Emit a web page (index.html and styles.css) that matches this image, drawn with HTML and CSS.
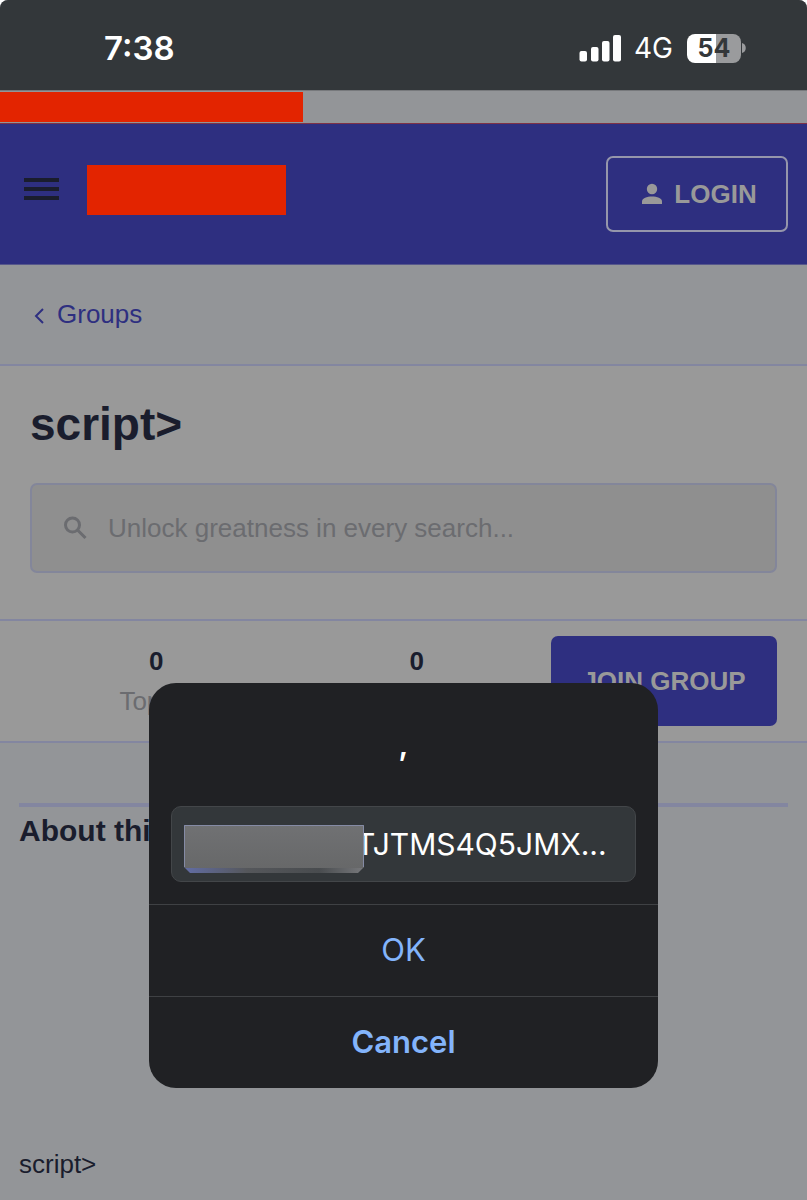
FILE: index.html
```html
<!DOCTYPE html>
<html lang="en">

<head>
  <meta charset="utf-8">
  <meta name="viewport" content="width=device-width, initial-scale=1">
  <title>Groups</title>
  <link rel="stylesheet" href="styles.css">
</head>

<body>
  <div class="status-bar">
    <span class="time">7:38</span>
    <div class="indicators">
      <svg class="signal" viewBox="0 0 42 28" width="42" height="28">
        <rect x="0.500" y="17" width="7.500" height="10.500" rx="2" />
        <rect x="12" y="13" width="7.500" height="14.500" rx="2" />
        <rect x="23" y="7" width="7.500" height="20.500" rx="2" />
        <rect x="34" y="1" width="8" height="26.500" rx="2" />
      </svg>
      <span class="network">4G</span>
      <div class="battery">
        <span class="battery-level">54</span>
        <svg class="battery-cap" viewBox="0 0 5 10" width="5" height="10">
          <path d="M1 0C6 1 6 9 1 10Z" />
        </svg>
      </div>
    </div>
  </div>

  <div class="notice"><div class="notice-block"></div></div>

  <header class="header">
    <button class="menu-btn" type="button" aria-label="Menu">
      <span></span>
      <span></span>
      <span></span>
    </button>
    <div class="logo"></div>
    <a class="login" href="#">
      <svg viewBox="0 0 22 22" width="22" height="22">
        <circle cx="11" cy="6" r="5.200" />
        <path d="M1 21V18.500C1 15 6 13.500 11 13.500S21 15 21 18.500V21Z" />
      </svg>
      LOGIN
    </a>
  </header>

  <nav class="breadcrumb">
    <a href="#">
      <svg viewBox="0 0 10 16" width="10" height="16">
        <path d="M9 1L2 8L9 15" />
      </svg>
      Groups
    </a>
  </nav>

  <main>
    <section class="hero">
      <h1>script&gt;</h1>
      <label class="search">
        <svg viewBox="0 0 24 24" width="24" height="24">
          <circle cx="8.500" cy="9" r="7" />
          <path d="M13.500 14L21.500 22" />
        </svg>
        <input type="search" placeholder="Unlock greatness in every search..." aria-label="Search">
      </label>
    </section>

    <section class="stats">
      <div class="stat"><b>0</b><span>Topics</span></div>
      <div class="stat"><b>0</b><span>Posts</span></div>
      <button class="join" type="button">JOIN GROUP</button>
    </section>

    <section class="about">
      <h2>About this group</h2>
      <p>script&gt;</p>
    </section>
  </main>

  <div class="overlay">
    <form class="dialog" role="dialog" aria-labelledby="dialog-title">
      <label class="dialog-title" id="dialog-title" for="prompt">,</label>
      <div class="prompt-box">
        <input class="prompt" id="prompt" type="text" value="TJTMS4Q5JMX...">
        <svg class="redacted" viewBox="0 0 180 48" width="180" height="48">
          <defs>
            <linearGradient id="edge">
              <stop offset="0" stop-color="#626da5" />
              <stop offset="0.350" stop-color="#55575b" />
              <stop offset="0.750" stop-color="#494c4f" />
              <stop offset="1" stop-color="#77787b" />
            </linearGradient>
            <linearGradient id="face" x2="0" y2="1">
              <stop offset="0" stop-color="#707173" />
              <stop offset="1" stop-color="#676869" />
            </linearGradient>
          </defs>
          <path d="M0 0H180V42L174 48H6L0 42Z" fill="url(#edge)" />
          <path d="M1 1H179V43H1Z" fill="url(#face)" />
          <path d="M0.500 42V0.500H179.500V42" fill="none" stroke="#858ba5" />
        </svg>
      </div>
      <button class="dialog-btn" type="button">OK</button>
      <button class="dialog-btn cancel" type="button">Cancel</button>
    </form>
  </div>
</body>

</html>
```
FILE: styles.css
```css
* {
  margin: 0;
  padding: 0;
  box-sizing: border-box;
}

html {
  background-color: #fff;
}

body {
  position: relative;
  min-height: 100vh;
  background-color: #939598;
  border-radius: 8px 8px 0 0;
  overflow: hidden;
  color: #1a1d2d;
  font-family: "Liberation Sans", Arial, sans-serif;
  font-size: 26px;
  line-height: 40px;
}

a {
  text-decoration: none;
}

button,
input {
  border: none;
  font: inherit;
}

/* status bar */
.status-bar {
  display: flex;
  align-items: center;
  justify-content: space-between;
  height: 90px;
  padding: 6px 61px 0 104px;
  background-color: #33373a;
  color: #fff;
  font-family: Inter, sans-serif;
}

.time {
  font-size: 33px;
  font-weight: 600;
}

.indicators {
  display: flex;
  align-items: center;
}

.signal {
  fill: #fff;
}

.network {
  margin: 0 14px 0 13px;
  font-size: 28px;
}

.battery {
  display: flex;
  align-items: center;
}

.battery-level {
  width: 54px;
  height: 29px;
  border-radius: 8px;
  background: linear-gradient(to right, #fff 54%, #9a9b9d 54%);
  color: #33373a;
  font-size: 25px;
  font-weight: 700;
  line-height: 29px;
  text-align: center;
}

.battery-cap {
  fill: #9a9b9d;
}

/* strip above the header */
.notice {
  height: 34px;
  padding-top: 1px;
  border-top: 1px solid #77797c;
  border-bottom: 1px solid #7f3246;
}

.notice-block {
  width: 303px;
  height: 30px;
  background-color: #e32400;
}

/* header */
.header {
  display: flex;
  align-items: center;
  height: 141px;
  padding: 0 19px 0 24px;
  background-color: #2e2f80;
  border-bottom: 1px solid #56578b;
}

.menu-btn {
  display: flex;
  flex-direction: column;
  gap: 5px;
  width: 35px;
  margin-bottom: 10px;
  background: none;
}

.menu-btn span {
  height: 4px;
  background-color: #1a1d2d;
}

.logo {
  width: 199px;
  height: 50px;
  margin: 0 0 8px 28px;
  background-color: #e32400;
}

.login {
  display: flex;
  align-items: center;
  justify-content: center;
  gap: 11px;
  width: 182px;
  height: 76px;
  margin-left: auto;
  padding-left: 4px;
  border: 2px solid #9596ab;
  border-radius: 7px;
  color: #999;
  font-weight: 700;
}

.login svg {
  fill: #999;
}

/* breadcrumb */
.breadcrumb {
  height: 101px;
  padding: 29px 34px;
  border-bottom: 2px solid #8386a0;
}

.breadcrumb a {
  display: inline-flex;
  align-items: center;
  gap: 13px;
  color: #2e2f80;
}

.breadcrumb svg {
  margin-top: 3px;
  fill: none;
  stroke: #2e2f80;
  stroke-width: 2;
}

/* title and search */
.hero {
  height: 255px;
  padding: 28px 30px 0;
  background-color: #999;
  border-bottom: 2px solid #8386a0;
}

h1 {
  margin-bottom: 29px;
  font-size: 46px;
  line-height: 60px;
}

.search {
  display: flex;
  align-items: center;
  gap: 20px;
  height: 90px;
  padding: 0 32px;
  border: 2px solid #83869a;
  border-radius: 7px;
  background-color: #8f8f8f;
}

.search svg {
  flex: none;
  fill: none;
  stroke: #6b6c70;
  stroke-width: 3;
}

.search input {
  flex: 1;
  min-width: 0;
  background: none;
  outline: none;
}

.search input::placeholder {
  color: #6b6c70;
}

/* stats */
.stats {
  display: flex;
  align-items: center;
  height: 122px;
  padding: 0 30px 0 26px;
  background-color: #999;
  border-bottom: 2px solid #8386a0;
}

.stat {
  display: flex;
  flex: 1;
  flex-direction: column;
  align-items: center;
}

.stat span {
  color: #6b6c70;
}

.join {
  width: 226px;
  height: 90px;
  margin-left: 4px;
  border-radius: 7px;
  background-color: #2e2f80;
  color: #999;
  font-weight: 700;
}

/* about */
.about {
  margin: 60px 19px 16px;
  border-top: 4px solid #8386a0;
}

h2 {
  margin: 4px 0 293px;
  font-size: 30px;
  line-height: 40px;
}

/* prompt dialog */
.overlay {
  position: absolute;
  inset: 0;
  display: flex;
  align-items: flex-start;
  justify-content: center;
  padding: 683px 20px 0;
}

.dialog {
  width: 100%;
  max-width: 509px;
  border-radius: 27px;
  background-color: #202124;
  color: #fff;
  font-family: Inter, sans-serif;
  font-size: 31px;
  overflow: hidden;
}

.dialog-title {
  display: block;
  padding: 41px 0 42px;
  font-weight: 600;
  text-align: center;
}

.prompt-box {
  position: relative;
  margin: 0 22px 22px;
}

.prompt {
  width: 100%;
  height: 76px;
  padding: 0 16px 0 184px;
  border: 1px solid #434649;
  border-radius: 10px;
  background-color: #33373a;
  color: #fff;
  font-size: 30px;
}

/* covers the first part of the code */
.redacted {
  position: absolute;
  top: 19px;
  left: 13px;
}

.dialog-btn {
  display: block;
  width: 100%;
  height: 92px;
  padding-bottom: 2px;
  border-top: 1px solid #3f4144;
  background: none;
  color: #83b4fb;
}

.cancel {
  font-weight: 600;
}
```
